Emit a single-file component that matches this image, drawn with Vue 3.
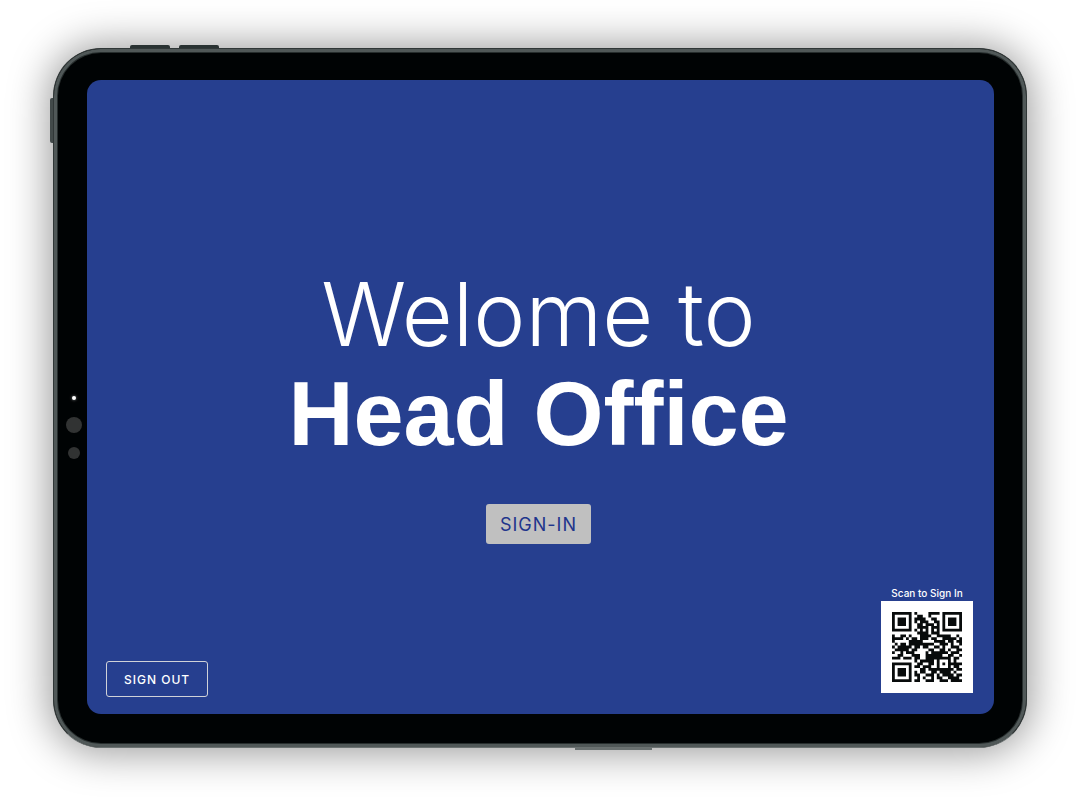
<script setup>
const qrRows = [
  '1111111010000111101111111',
  '1000001001100100001000001',
  '1011101011110011001011101',
  '1011101010111001101011101',
  '1011101001101110101011101',
  '1000001001111011101000001',
  '1111111010101010101111111',
  '0000000001111011100000000',
  '1001101000111100111110010',
  '1111010110111011001111101',
  '1000001111100001111011011',
  '0101101111111110011101001',
  '1011111011011001101001110',
  '0111110110000110011010011',
  '1001011100001011111101110',
  '0011000111001111110011001',
  '1110111011001111111110110',
  '0000000010111110100010100',
  '1111111001100110101011111',
  '1000001011011100100010110',
  '1011101000110111111111011',
  '1011101010110011011110100',
  '1011101011001110101111011',
  '1000001001010010110011110',
  '1111111011001110011101111',
]
const qrPath = qrRows
  .flatMap((row, y) => [...row].map((cell, x) => (cell === '1' ? `M${x} ${y}h1v1h-1z` : '')))
  .join('')
</script>

<template>
  <div class="page">
    <div class="device">
      <span class="key volume-up"></span>
      <span class="key volume-down"></span>
      <span class="key power"></span>
      <span class="key connector"></span>
      <div class="sensors">
        <span class="led"></span>
        <span class="lens"></span>
        <span class="lens small"></span>
      </div>
      <main class="screen">
        <section class="hero">
          <h1><span class="greeting">Welome to</span><span class="place">Head Office</span></h1>
          <button class="sign-in" type="button">SIGN-IN</button>
        </section>
        <footer class="footer">
          <button class="sign-out" type="button">SIGN OUT</button>
          <figure class="scan">
            <figcaption>Scan to Sign In</figcaption>
            <svg class="qr" viewBox="0 0 25 25" role="img" aria-label="QR code">
              <path :d="qrPath" fill="#080b0b" />
            </svg>
          </figure>
        </footer>
      </main>
    </div>
  </div>
</template>

<style>
body {
  margin: 0;
  background: #fff;
}
</style>

<style scoped>
.page {
  box-sizing: border-box;
  min-height: 100vh;
  display: flex;
  padding: 48px 53px 49px 53px;
  font-family: Inter, "Liberation Sans", sans-serif;
}
.device {
  position: relative;
  box-sizing: border-box;
  flex: 1;
  display: flex;
  padding: 31px 32px 33px 33px;
  border: 1px solid #303737;
  border-bottom-color: #6b7272;
  border-radius: 48px;
  background: #000304;
  box-shadow:
    inset 0 0 0 3px #505858,
    inset 0 0 0 4px #262d2d,
    0 1px 40px 4px rgba(0, 0, 0, 0.4);
}
.key {
  position: absolute;
  background: #293232;
}
.volume-up,
.volume-down {
  top: -4px;
  height: 3px;
  width: 40px;
  border-radius: 2px 2px 0 0;
}
.volume-up {
  left: 76px;
}
.volume-down {
  left: 125px;
}
.power {
  left: -4px;
  top: 49px;
  width: 3px;
  height: 45px;
  background: #424a4a;
  border-radius: 2px 0 0 2px;
}
.connector {
  left: 521px;
  bottom: -3px;
  width: 77px;
  height: 2px;
  background: #697070;
}
.sensors {
  position: absolute;
  left: 11px;
  top: 347px;
  width: 18px;
  display: flex;
  flex-direction: column;
  align-items: center;
}
.led {
  width: 4px;
  height: 4px;
  margin-bottom: 17px;
  border-radius: 50%;
  background: #fff;
  box-shadow: 0 0 3px #8a8f8f;
}
.lens {
  width: 16px;
  height: 16px;
  margin-bottom: 14px;
  border-radius: 50%;
  background: #313333;
}
.lens.small {
  width: 12px;
  height: 12px;
  margin: 0;
}
.screen {
  flex: 1;
  display: grid;
  border-radius: 14px;
  background: #263f8f;
  color: #fff;
}
.hero,
.footer {
  grid-area: 1 / 1;
}
.hero {
  align-self: center;
  display: flex;
  flex-direction: column;
  align-items: center;
  gap: 40px;
  padding: 14px 4px 0 0;
}
h1 {
  margin: 0;
  display: flex;
  flex-direction: column;
  align-items: center;
  font-weight: 300;
  line-height: 100px;
}
.greeting {
  font-size: 88px;
}
.place {
  font-family: "Liberation Sans", Arial, sans-serif;
  font-size: 90px;
  font-weight: 700;
}
button {
  font-family: inherit;
  cursor: pointer;
}
.sign-in {
  height: 40px;
  padding: 0 14px;
  border: 0;
  border-radius: 3px;
  background: #c0c0c0;
  color: #1f358c;
  font-size: 18px;
  font-weight: 400;
  letter-spacing: 1px;
}
.footer {
  align-self: end;
  display: flex;
  justify-content: space-between;
  align-items: flex-end;
  padding: 0 21px 17px 19px;
}
.sign-out {
  height: 36px;
  padding: 0 17px;
  border: 1px solid #d0d2d8;
  border-radius: 3px;
  background: transparent;
  color: #fff;
  font-size: 11px;
  font-weight: 500;
  letter-spacing: 1px;
}
.scan {
  margin: 0 0 4px;
  display: flex;
  flex-direction: column;
  align-items: center;
}
figcaption {
  font-size: 10px;
  font-weight: 500;
  line-height: 16px;
}
.sign-out {
  font-size: 12px;
}
.qr {
  width: 70px;
  height: 70px;
  padding: 11px;
  background: #fff;
}
</style>
